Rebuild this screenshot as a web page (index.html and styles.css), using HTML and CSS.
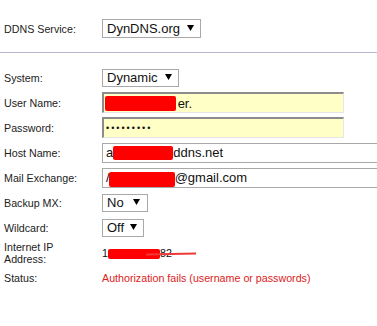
FILE: index.html
```html
<!DOCTYPE html>
<html lang="en">
<head>
    <meta charset="UTF-8">
    <meta name="viewport" content="width=device-width, initial-scale=1.0">
    <title>DDNS</title>
    <link rel="stylesheet" href="styles.css">
</head>
<body>
    <div class="service">
        <span class="label">DDNS Service:</span>
        <span class="select">DynDNS.org <svg class="arrow" width="7" height="6" viewBox="0 0 7 6"><path d="M0 0H7L3.5 6Z"/></svg></span>
    </div>

    <div class="divider"></div>

    <div class="form">
        <span class="label">System:</span>
        <span class="select">Dynamic <svg class="arrow" width="7" height="6" viewBox="0 0 7 6"><path d="M0 0H7L3.5 6Z"/></svg></span>

        <span class="label">User Name:</span>
        <span class="field yellow">t<span class="redact redact-user"></span>er.</span>

        <span class="label">Password:</span>
        <span class="field yellow"><span class="dots">&bull;&bull;&bull;&bull;&bull;&bull;&bull;&bull;&bull;</span></span>

        <span class="label">Host Name:</span>
        <span class="field wide">a<span class="redact redact-host"></span>ddns.net</span>

        <span class="label">Mail Exchange:</span>
        <span class="field wide">/<span class="redact redact-mail"></span>@gmail.com</span>

        <span class="label">Backup MX:</span>
        <span class="select select-no">No <svg class="arrow" width="7" height="6" viewBox="0 0 7 6"><path d="M0 0H7L3.5 6Z"/></svg></span>

        <span class="label">Wildcard:</span>
        <span class="select select-off">Off <svg class="arrow" width="7" height="6" viewBox="0 0 7 6"><path d="M0 0H7L3.5 6Z"/></svg></span>

        <span class="label">Internet IP<br>Address:</span>
        <span class="ip">1<span class="redact redact-ip"></span>82<span class="strike"></span></span>

        <span class="label">Status:</span>
        <span class="status">Authorization fails (username or passwords)</span>
    </div>
</body>
</html>
```

FILE: styles.css
```css
html, body {
    overflow: hidden;
}

body {
    margin: 0;
    font-family: "Liberation Sans", Arial, sans-serif;
    font-size: 10.7px;
    color: #222;
    background-color: #fff;
}

.service,
.form {
    display: grid;
    grid-template-columns: 98px max-content;
    align-items: center;
    padding-left: 4px;
}

.service {
    margin-top: 19px;
    height: 19px;
}

.form {
    grid-auto-rows: 25px;
}

.divider {
    height: 1px;
    background-color: #b8b6d2;
    margin: 14px 0 12px;
}

.label {
    line-height: 12px;
}

.select {
    display: inline-flex;
    align-items: center;
    justify-self: start;
    box-sizing: border-box;
    height: 18px;
    padding: 0 6px 0 4px;
    border: 1px solid #a9a9a9;
    font-size: 13px;
    color: #111;
    background-color: #fff;
    gap: 7px;
}

.service .select {
    height: 19px;
}

.select-no {
    gap: 9px;
    padding-right: 7px;
}

.select-off {
    gap: 6px;
}

.arrow {
    fill: #000;
    margin-top: -2px;
}

.field {
    display: flex;
    align-items: center;
    box-sizing: border-box;
    height: 20px;
    padding-left: 3px;
    font-size: 13px;
    color: #111;
    border: 1px solid #a9a9a9;
    background-color: #fff;
    overflow: hidden;
    white-space: nowrap;
}

.field.wide {
    width: 275px;
    border-right: none;
}

.field.yellow {
    width: 242px;
    height: 21px;
    padding-left: 1px;
    background-color: #ffffc6;
    border-top: 2px solid #8c8c8c;
    border-left: 2px solid #8c8c8c;
    border-right: 1px solid #e6e6e6;
    border-bottom: 1px solid #e6e6e6;
}

.dots {
    font-size: 9px;
    letter-spacing: 2px;
    margin-left: 1px;
}

.redact {
    display: inline-block;
    background-color: #ff0000;
    border-radius: 2px;
}

.redact-user {
    width: 71px;
    height: 15px;
    margin-left: -4px;
    margin-right: 2px;
}

.redact-host {
    width: 60px;
    height: 14px;
}

.redact-mail {
    width: 66px;
    height: 15px;
    margin-left: -1px;
    margin-top: 3px;
}

.ip {
    position: relative;
    color: #111;
}

.redact-ip {
    width: 52px;
    height: 10px;
    vertical-align: -2px;
}

.strike {
    position: absolute;
    left: 44px;
    top: 6px;
    width: 50px;
    height: 2px;
    background-color: #f03838;
    transform: rotate(-1deg);
}

.status {
    color: #dd2222;
}
```
